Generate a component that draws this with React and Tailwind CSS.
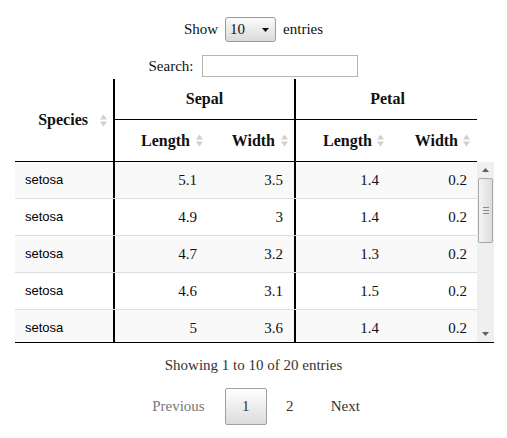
import React from 'react';

const rows = [
  ['setosa', '5.1', '3.5', '1.4', '0.2'],
  ['setosa', '4.9', '3', '1.4', '0.2'],
  ['setosa', '4.7', '3.2', '1.3', '0.2'],
  ['setosa', '4.6', '3.1', '1.5', '0.2'],
  ['setosa', '5', '3.6', '1.4', '0.2'],
];

const SortIcon = () => (
  <svg width="7" height="13" viewBox="0 0 7 13" className="shrink-0">
    <path d="M0 5.5 L3.5 0.5 L7 5.5 Z" fill="#cfcfcf" />
    <path d="M0 7.5 L3.5 12.5 L7 7.5 Z" fill="#cfcfcf" />
  </svg>
);

const cols = 'grid grid-cols-[100px_95px_86px_94px_87px]';

export default function App() {
  return (
    <div className="w-[507px] h-[438px] bg-white text-[#111] font-['Liberation_Serif',serif] text-[15px]">
      {/* length selector */}
      <div className="pt-[17px] flex justify-center items-center h-[42px]">
        <span>Show</span>
        <div className="mx-[7px] w-[51px] h-[25px] border border-[#9a9a9a] rounded-[3px] bg-gradient-to-b from-[#fbfbfb] to-[#dadada] flex items-center justify-between pl-[4px] pr-[6px]">
          <span>10</span>
          <svg width="7" height="4" viewBox="0 0 7 4">
            <path d="M0 0 L7 0 L3.5 4 Z" fill="#111" />
          </svg>
        </div>
        <span>entries</span>
      </div>

      {/* search */}
      <div className="mt-[13px] flex justify-center items-center gap-[9px] h-[22px]">
        <span>Search:</span>
        <div className="w-[156px] h-[22px] border border-[#b5b5b5] bg-white" />
      </div>

      {/* table */}
      <div className="mt-[2px] ml-[15px]">
        <div className={`${cols} w-[462px] font-bold text-[16px]`}>
          <div className="row-span-2 border-r-2 border-b border-black flex items-center justify-end pr-[6px] gap-[12px]">
            <span>Species</span>
            <SortIcon />
          </div>
          <div className="col-span-2 h-[41px] border-r-2 border-b border-black flex items-center justify-center">
            Sepal
          </div>
          <div className="col-span-2 h-[41px] border-b border-black flex items-center justify-center pl-[2px]">
            Petal
          </div>
          <div className="h-[42px] border-b border-black flex items-center justify-end pr-[7px] gap-[6px]">
            <span>Length</span>
            <SortIcon />
          </div>
          <div className="h-[42px] border-r-2 border-b border-black flex items-center justify-end pr-[6px] gap-[6px]">
            <span>Width</span>
            <SortIcon />
          </div>
          <div className="h-[42px] border-b border-black flex items-center justify-end pr-[6px] gap-[5px]">
            <span>Length</span>
            <SortIcon />
          </div>
          <div className="h-[42px] border-b border-black flex items-center justify-end pr-[7px] gap-[5px]">
            <span>Width</span>
            <SortIcon />
          </div>
        </div>

        {/* scroll body */}
        <div className="flex w-[479px] h-[181px] border-b border-black">
          <div className="w-[462px] h-[180px] overflow-hidden">
            {rows.map((r, i) => (
              <div
                key={i}
                className={`${cols} h-[37px] border-b border-[#dddddd] ${i % 2 === 0 ? 'bg-[#f9f9f9]' : 'bg-white'}`}
              >
                <div className="border-r-2 border-black flex items-center pl-[10px] font-['Liberation_Sans',Arial,sans-serif] text-[13px] text-black">
                  {r[0]}
                </div>
                <div className="flex items-center justify-end pr-[13px]">{r[1]}</div>
                <div className="border-r-2 border-black flex items-center justify-end pr-[11px]">{r[2]}</div>
                <div className="flex items-center justify-end pr-[11px]">{r[3]}</div>
                <div className="flex items-center justify-end pr-[10px]">{r[4]}</div>
              </div>
            ))}
          </div>

          {/* scrollbar */}
          <div className="w-[17px] h-[180px] bg-[#efefef] flex flex-col items-center">
            <div className="h-[16px] w-full flex items-center justify-center">
              <svg width="7" height="4" viewBox="0 0 7 4">
                <path d="M0 4 L3.5 0 L7 4 Z" fill="#606060" />
              </svg>
            </div>
            <div className="w-[15px] h-[65px] border border-[#a8a8a8] rounded-[2px] bg-gradient-to-r from-[#f4f4f4] to-[#dcdcdc] flex flex-col items-center justify-center gap-[2px]">
              <div className="w-[6px] h-px bg-[#8a8a8a]" />
              <div className="w-[6px] h-px bg-[#8a8a8a]" />
              <div className="w-[6px] h-px bg-[#8a8a8a]" />
            </div>
            <div className="flex-1" />
            <div className="h-[16px] w-full flex items-center justify-center">
              <svg width="7" height="4" viewBox="0 0 7 4">
                <path d="M0 0 L7 0 L3.5 4 Z" fill="#606060" />
              </svg>
            </div>
          </div>
        </div>
      </div>

      {/* info */}
      <div className="mt-[14px] h-[17px] leading-[17px] text-center text-[#333]">
        Showing 1 to 10 of 20 entries
      </div>

      {/* pagination */}
      <div className="mt-[14px] pl-[5px] flex justify-center items-center text-[#333]">
        <div className="h-[37px] px-[17px] flex items-center text-[#777] border border-transparent">Previous</div>
        <div className="ml-[2px] h-[37px] w-[42px] flex items-center justify-center border border-[#a0a0a0] rounded-[2px] bg-gradient-to-b from-white to-[#dcdcdc]">
          1
        </div>
        <div className="ml-[2px] h-[37px] w-[42px] flex items-center justify-center border border-transparent">2</div>
        <div className="ml-[2px] h-[37px] px-[17px] flex items-center border border-transparent">Next</div>
      </div>
    </div>
  );
}
